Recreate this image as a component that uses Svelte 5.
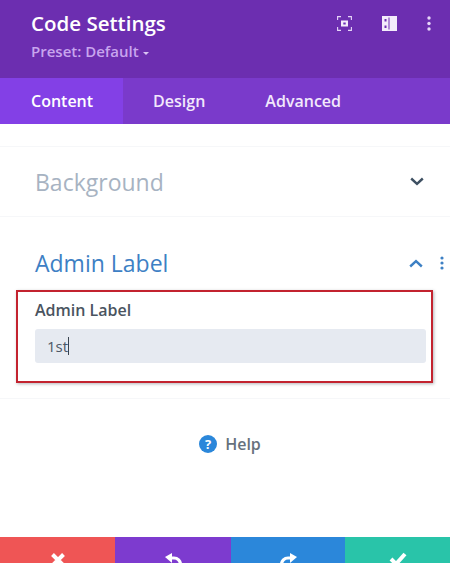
<script>
  const tabs = ['Content', 'Design', 'Advanced']
  let active = 'Content'
</script>

<div class="panel">
  <header class="head">
    <div class="titles">
      <h1>Code Settings</h1>
      <p>Preset: Default <span class="caret"></span></p>
    </div>
    <div class="head-icons">
      <svg width="15" height="15" viewBox="0 0 15 15" fill="none" stroke="#e6d6f8" stroke-width="1.1">
        <path d="M.6 4V.6H4M11 .6h3.400V4M14.400 11v3.400H11M4 14.400H.6V11" />
        <rect x="4" y="4.500" width="7" height="6" fill="#f3ecfb" stroke="none" />
        <rect x="6.300" y="6.500" width="2.400" height="2" fill="#6c2eb9" stroke="none" />
      </svg>
      <svg width="15" height="15" viewBox="0 0 15 15">
        <path fill="#f3ecfb" fill-rule="evenodd" d="M0 0h15v15H0zM2.500 3v2.500h2V3zm0 6.500V12h2V9.500zM6.500 1.500v12h1v-12z" />
      </svg>
      <svg class="dots" width="4" height="15" viewBox="0 0 4 15" fill="#e6d6f8">
        <circle cx="2" cy="2" r="1.700" /><circle cx="2" cy="7.500" r="1.700" /><circle cx="2" cy="13" r="1.700" />
      </svg>
    </div>
  </header>

  <nav class="tabs">
    {#each tabs as tab}
      <button class="tab" class:active={tab === active} on:click={() => (active = tab)}>{tab}</button>
    {/each}
  </nav>

  <div class="body">
    <section class="toggle closed">
      <h2>Background</h2>
      <svg class="chev" width="14" height="9" viewBox="0 0 14 9" fill="none" stroke="#3e5062" stroke-width="2.400">
        <path d="M1.200 1.500 7 6.800l5.800-5.300" />
      </svg>
    </section>

    <section class="toggle open">
      <div class="toggle-head">
        <h2>Admin Label</h2>
        <svg class="chev" width="14" height="9" viewBox="0 0 14 9" fill="none" stroke="#3d80c4" stroke-width="2.400">
          <path d="M1.200 7.500 7 2.200l5.800 5.300" />
        </svg>
        <svg class="more" width="4" height="14" viewBox="0 0 4 14" fill="#3d80c4">
          <circle cx="2" cy="2" r="1.600" /><circle cx="2" cy="7" r="1.600" /><circle cx="2" cy="12" r="1.600" />
        </svg>
      </div>
      <div class="field">
        <label for="admin-label">Admin Label</label>
        <div class="input" id="admin-label">1st<span class="cursor"></span></div>
      </div>
    </section>

    <div class="help">
      <span class="help-icon">?</span>
      <span>Help</span>
    </div>
  </div>

  <footer class="actions">
    <div class="act red">
      <svg width="16" height="16" viewBox="0 0 16 16" fill="none" stroke="#fff" stroke-width="4"><path d="M2.500 2.500l11 11M13.500 2.500l-11 11" /></svg>
    </div>
    <div class="act purple">
      <svg width="19" height="20" viewBox="0 0 19 20" fill="none"><path stroke="#fff" stroke-width="3.200" d="M6 6h4a6.500 6.500 0 0 1 6.500 6.500V20" /><path fill="#fff" d="M8 1v10L1 5z" /></svg>
    </div>
    <div class="act blue">
      <svg width="19" height="20" viewBox="0 0 19 20" fill="none"><path stroke="#fff" stroke-width="3.200" d="M13 6H9a6.500 6.500 0 0 0-6.500 6.500V20" /><path fill="#fff" d="M11 1v10l7-6z" /></svg>
    </div>
    <div class="act green">
      <svg width="18" height="14" viewBox="0 0 18 14" fill="none" stroke="#fff" stroke-width="4"><path d="M2 7l5 5L16 2" /></svg>
    </div>
  </footer>
</div>

<style>
  :global(body) {
    margin: 0;
    overflow: hidden;
  }

  .panel {
    width: 450px;
    height: 563px;
    overflow: hidden;
    display: flex;
    flex-direction: column;
    background: #fff;
    font-family: "Open Sans", "Liberation Sans", sans-serif;
  }

  .head {
    height: 78px;
    flex-shrink: 0;
    box-sizing: border-box;
    padding: 10px 19px 0 31px;
    background: #6c2eb0;
    display: flex;
    justify-content: space-between;
    align-items: flex-start;
  }

  h1 {
    margin: 0;
    color: #fff;
    font-size: 20.500px;
    line-height: 27px;
    font-weight: 600;
  }

  .titles p {
    margin: 4px 0 0;
    color: #c8a5ee;
    font-size: 15px;
    line-height: 20px;
    font-weight: 600;
  }

  .caret {
    display: inline-block;
    width: 0;
    height: 0;
    margin: 0 0 2px 0;
    border: 3px solid transparent;
    border-top: 3px solid #d9c4f3;
    border-bottom: 0;
  }

  .head-icons {
    display: flex;
    align-items: center;
    gap: 30px;
    padding-top: 6px;
  }

  .tabs {
    height: 46px;
    flex-shrink: 0;
    display: flex;
    background: #7a3acb;
  }

  .tab {
    border: 0;
    background: none;
    padding: 0 30px;
    color: #f2e8fc;
    font: 600 16px "Open Sans", "Liberation Sans", sans-serif;
  }

  .tab:first-child {
    padding-left: 31px;
  }

  .tab.active {
    background: #8340e6;
    color: #fff;
  }

  .body {
    flex: 1;
    min-height: 0;
    padding-top: 22px;
  }

  .toggle {
    border-top: 1px solid #f6f7f9;
    padding: 0 35px;
  }

  .closed {
    height: 69px;
    display: flex;
    align-items: center;
    justify-content: space-between;
    padding-right: 26px;
  }

  h2 {
    margin: 0;
    font-size: 23px;
    line-height: 30px;
    font-weight: 400;
  }

  .closed h2 {
    color: #a7b3c2;
  }

  .open {
    padding: 31px 0 15px;
    border-bottom: 1px solid #f6f7f9;
  }

  .toggle-head {
    display: flex;
    align-items: center;
    padding: 0 6px 0 35px;
  }

  .toggle-head h2 {
    flex: 1;
    color: #3d80c4;
  }

  .more {
    margin-left: 17px;
  }

  .field {
    margin: 12px 17px 0 16px;
    border: 2px solid #c3232f;
    box-shadow: 1px 1px 3px rgba(90, 90, 100, 0.45);
    padding: 7px 5px 18px 17px;
  }

  label {
    display: block;
    color: #4a545f;
    font-size: 16px;
    line-height: 22px;
    font-weight: 600;
  }

  .input {
    margin-top: 8px;
    height: 34px;
    box-sizing: border-box;
    padding: 0 12px;
    border-radius: 3px;
    background: #e6eaf1;
    color: #4c5866;
    font-size: 15px;
    font-weight: 400;
    line-height: 34px;
    display: flex;
    align-items: center;
  }

  .cursor {
    width: 1px;
    height: 18px;
    background: #3a4450;
  }

  .help {
    display: flex;
    justify-content: center;
    align-items: center;
    gap: 8px;
    margin-top: 34px;
    padding-left: 10px;
    color: #66717c;
    font-size: 16px;
    font-weight: 600;
  }

  .help-icon {
    width: 18px;
    height: 18px;
    border-radius: 50%;
    background: #2b87da;
    color: #fff;
    font-size: 13px;
    font-weight: 700;
    line-height: 18px;
    text-align: center;
  }

  .actions {
    height: 26px;
    flex-shrink: 0;
    display: grid;
    grid-template-columns: 115px 116px 114px 105px;
  }

  .act {
    height: 46px;
    display: flex;
    justify-content: center;
    padding-top: 15px;
    box-sizing: border-box;
  }

  .red { background: #ef5555; }
  .purple { background: #7d3bcf; }
  .blue { background: #2b87da; }
  .green { background: #29c4a9; }
</style>
